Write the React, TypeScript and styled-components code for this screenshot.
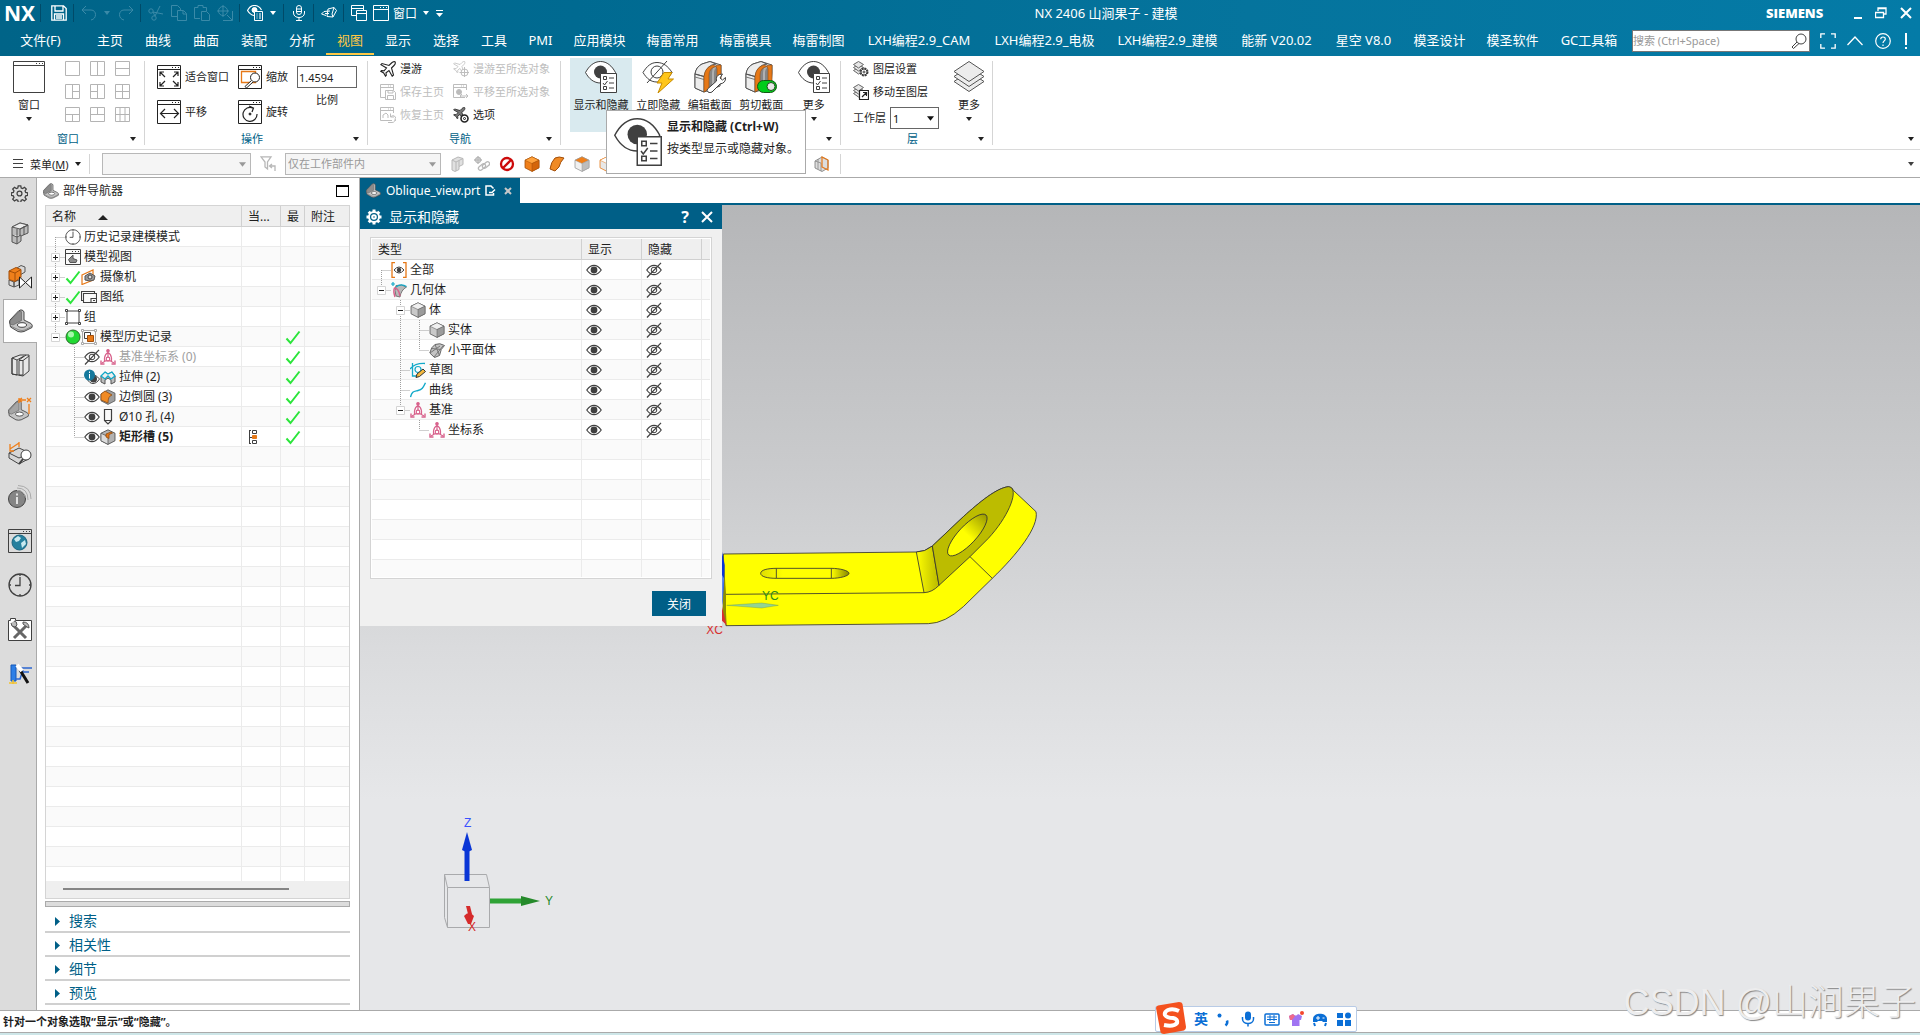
import React from "react";
import styled, { createGlobalStyle } from "styled-components";

const blue = "#005f87";
const ink = "#404040";
const line = "#aaaaaa";

const Global = createGlobalStyle`
  * { box-sizing: border-box; }
  html, body { margin: 0; }
  body, button, input, select {
    font-family: "Noto Sans", "Noto Sans CJK SC", sans-serif;
    font-size: 12px;
    color: #1e1e1e;
  }
  button { background: none; border: 0; padding: 0; margin: 0; }
  svg { display: block; flex: none; }
`;

/* ---------- icon drawing ---------- */

type IconProps = { size?: number; box?: number; children: React.ReactNode; w?: number };
const Icon = ({ size = 16, box = 16, w = 1, children }: IconProps) => (
  <svg width={size} height={size} viewBox={`0 0 ${box} ${box}`} fill="none" stroke="currentColor" strokeWidth={w} aria-hidden="true">
    {children}
  </svg>
);

const Caret = ({ s = 6 }: { s?: number }) => (
  <svg width={s} height={s === 6 ? 4 : 5} viewBox="0 0 6 4" aria-hidden="true"><path d="M0 0h6L3 4z" fill="currentColor" /></svg>
);

const listSheet = (
  <g stroke={ink}>
    <path d="M15.500 12.500h16v19h-16z" fill="#fff" />
    <path d="M18.500 15.500h3v3h-3zM18.500 25.500h3v3h-3z" />
    <path d="M24 17h5M24 22h5M24 27h5M18 22l1.500 2 3-4" />
  </g>
);
const EyeList = ({ size = 32 }: { size?: number }) => (
  <Icon size={size} box={32}>
    <path d="M.5 11.500C4 5 9 .5 15.500 .5S27 5 30.500 11.500C27 18 22 22 15.500 22S4 18 .5 11.500z" fill="#fff" stroke={ink} />
    <circle cx="15.500" cy="11" r="6.500" fill={ink} stroke="none" />
    {listSheet}
  </Icon>
);
const EyeListWhite = () => (
  <Icon>
    <path d="M7 10.500C4 10 2 8 .5 5.500 2 2.500 4.500 .5 7.500 .5c3 0 5.500 2 7 4.500" strokeWidth="1.200" />
    <circle cx="7.500" cy="5" r="2.500" fill="#fff" />
    <path d="M7.500 6.500h8v9h-8z" fill="#006890" />
    <path d="M9.500 9h1M9.500 11h1M9.500 13h1M12 9h2M12 11h2M12 13h2" />
  </Icon>
);
const EyeFlash = () => (
  <Icon size={32} box={32}>
    <path d="M1 11.500C5 5 9 1.500 15 1.500s11 3.500 15 10C26 18 21 21 15 21S5 18 1 11.500z" stroke={ink} />
    <circle cx="15" cy="11" r="6" stroke={ink} />
    <path d="M5 22L25 0" stroke={ink} />
    <path d="M22 11.500h8l-4 6.500h5.500L16 32l4-10h-5z" fill="#ffc61a" stroke="#c78a00" />
  </Icon>
);
const SectionBody = ({ tool }: { tool: "wrench" | "switch" }) => (
  <Icon size={32} box={32}>
    <path d="M1 13Q2 6 8 3l8-2.500L27 4v8l-1 13-10 4-6 2-9-4z" fill="#cfcfcf" stroke="#555" />
    <path d="M1 13l9 2.500V31l-9-4zM8 3l8-2.500L22 3q-10 1-12 12.500L1 13Q2 6 8 3z" fill="#ededed" stroke="#555" />
    <path d="M1 16l9 2.500" stroke="#777" />
    <path d="M15 27V13q0-6 5-7.500L23 6v18z" fill="#858585" stroke="none" />
    <path d="M19 26V12q0-5 3-6" stroke="#b0b0b0" strokeWidth="2" />
    <path d="M10 31V15.500Q11 6 19 4l3 1.500Q15 7 15 14v14z" fill="#e67817" stroke="#8d4d14" strokeWidth=".6" />
    <path d="M22 4.500L27 4v17l-4 3V8z" fill="#e67817" stroke="#8d4d14" strokeWidth=".6" />
    {tool === "wrench" ? (
      <path d="M13.500 28l9-8q-1-5 3-6.500l3-.5-2.500 4 2.500 2 3-2.500q.5 5.500-5.500 6.500l-8 8q-2 1.500-4 0-1.500-1.500-.5-3z" fill="#fff" stroke={ink} />
    ) : (
      <g><rect x="12.500" y="19.500" width="19" height="12" rx="6" fill="#00cc1a" stroke="#145a14" /><circle cx="26" cy="25.500" r="4" fill="#e7e7e7" stroke="#1b4e1b" /></g>
    )}
  </Icon>
);
const Layers = ({ size = 32 }: { size?: number }) => (
  <Icon size={size} box={32}>
    {[10, 5, 0].map((d) => <path key={d} d={`M16 ${d + 0.5}l15 10-15 10-15-10z`} fill="#ececec" stroke="#555" />)}
  </Icon>
);
const LayerSmall = ({ kind }: { kind: "gear" | "move" }) => (
  <Icon>
    {[6, 3, 0].map((d) => <path key={d} d={`M5.500 ${d + 0.5}l5 3-5 3.500-5-3.500z`} fill="#e6e6e6" stroke="#666" />)}
    {kind === "gear" ? (
      <g stroke={ink}><circle cx="11" cy="11" r="3.700" fill="#fff" strokeWidth="1.600" strokeDasharray="2 .9" /><circle cx="11" cy="11" r="3" fill="#fff" /><circle cx="11" cy="11" r="1" /></g>
    ) : (
      <path d="M6.500 6.500h9v9h-9zM9 13l4-4M10 8.500h3.500V12" fill="#fff" stroke="#222" strokeWidth="1.200" />
    )}
  </Icon>
);
const Win = ({ size = 24, children }: { size?: number; children?: React.ReactNode }) => (
  <Icon size={size} box={size}>
    <path d={`M.5 .5h${size - 1}v${size - 1}h-${size - 1}zM0 4.500h${size}`} />
    <path d={`M${size - 9} 2.500h1m2 0h1m2 0h1`} />
    {children}
  </Icon>
);
const fitGlyph = <path d="M3 11V7h4M3 7l5 5M21 11V7h-4M21 7l-5 5M3 17v4h4M3 21l5-5M21 17v4h-4M21 21l-5-5" strokeWidth="1.200" />;
const zoomGlyph = <g><path d="M3.500 6.500h14v11h-14z" stroke="#e67817" strokeWidth="1.300" /><circle cx="17" cy="12.500" r="4.500" fill="#fff" /><path d="M13.500 15.500L7 21.500l1.500 1.500 6.500-6" fill="#fff" /></g>;
const panGlyph = <path d="M4 13.500h17M8 9l-4.500 4.500L8 18M17 9l4.500 4.500L17 18" strokeWidth="1.200" />;
const rotateGlyph = <g><path d="M15 8a7 7 0 1 0 4 6M11 6l4.500 2L14 12" strokeWidth="1.200" /><circle cx="12" cy="14" r="1" fill={ink} /></g>;

const LAYOUTS = ["", "M7.500 0v15", "M0 7.500h15", "M7.500 0v15M7.500 7.500H15", "M7.500 0v15M0 7.500h7.500", "M7.500 0v15M0 7.500h15", "M0 7.500h15M7.500 7.500V15", "M0 7.500h15M7.500 0v7.500", "M0 7.500h15M5 0v15M10 0v15"];
const LayoutIcon = ({ d }: { d: string }) => (
  <svg width="15" height="15" fill="none" stroke="#b4b4b4" aria-hidden="true"><path d={`M.5 .5h14v14H.5z${d}`} /></svg>
);

const planeD = "M15 .8c-1.200-.5-2.500.2-3.500 1.200L9 4.500 2 2.500 .8 3.700 6.500 7 4 9.800l-2.500-.3-.8.8 3 1.700 1.800 3.200.8-.8-.3-2.600L9 9.500l3.200 5.700 1.300-1.200-2-7L14 4.500C15 3.500 15.700 2 15 .8z";
const Plane = () => <Icon><path d={planeD} strokeWidth="1.100" /></Icon>;
const PlaneTool = ({ gear }: { gear?: boolean }) => (
  <Icon>
    <g transform="scale(.78)"><path d={planeD} fill={gear ? "#777" : "none"} /></g>
    <circle cx="11.500" cy="11.500" r="3.500" fill="#fff" strokeWidth={gear ? 1.600 : 1} />
    {gear ? <circle cx="11.500" cy="11.500" r="1" /> : <path d="M11.500 6v10M6.500 11.500H16" />}
  </Icon>
);
const HomeWin = ({ kind }: { kind: "save" | "restore" | "pan" }) => (
  <Icon>
    <path d="M12 13.500H.5V.5h13V6M0 3.500h14M8 2h1M10 2h1" />
    {kind === "save" && <path d="M5.500 6.500h8l2 2v7h-10zM8 6.500V9h5V6.500M7.500 15v-3.500h6V15" fill="#fff" />}
    {kind === "restore" && <path d="M3 11V8l3-2 2 2v3M15 14a3 3 0 1 0-4-4.500M10.500 6.500v3.500H14M8 15.500h4a3 3 0 0 0 3-4" />}
    {kind === "pan" && <g><circle cx="6" cy="8" r="2.500" fill="#bbb" /><path d="M7 12h8M9 10l-2 2 2 2M13 10l2 2-2 2" /></g>}
  </Icon>
);

const Eye = () => (
  <Icon><path d="M.8 8C3 4.800 5.200 3.300 8 3.300S13 4.800 15.200 8C13 11.200 10.800 12.700 8 12.700S3 11.200 .8 8z" stroke={ink} strokeWidth="1.200" fill="#fff" /><circle cx="8" cy="8" r="3.400" fill={ink} stroke="none" /></Icon>
);
const EyeOff = () => (
  <Icon><path d="M.8 8C3 4.800 5.200 3.300 8 3.300S13 4.800 15.200 8C13 11.200 10.800 12.700 8 12.700S3 11.200 .8 8z" stroke={ink} strokeWidth="1.200" /><circle cx="8" cy="8" r="2.800" stroke={ink} /><path d="M1 15.500L15 .8" stroke={ink} strokeWidth="1.200" /></Icon>
);
const EyeInfo = () => (
  <Icon><path d="M3 10c2-3 4-4 6-4s4 1 6.500 4c-2 3-4 4.500-6.500 4.500S5 13 3 10z" stroke={ink} fill="#fff" /><circle cx="9.500" cy="10" r="3.500" fill={ink} stroke="none" /><circle cx="5.500" cy="6" r="5.500" fill="#14789c" stroke="none" /><path d="M5.500 5v4.500M5.500 2.500V4" stroke="#fff" /></Icon>
);
const Tick = () => <Icon><path d="M1.500 9.500l4 4.500L14.500 2.500" stroke="#2be53b" strokeWidth="2" /></Icon>;
const Clock = ({ size = 16 }: { size?: number }) => (
  <Icon size={size} box={24}><circle cx="12" cy="12" r="11" strokeWidth="1.300" /><path d="M12 4v8.500H7M12 1v2M12 21v2M1 12h2M21 12h2" strokeWidth="1.300" /></Icon>
);
const Bracket = ({ size = 16 }: { size?: number }) => (
  <Icon size={size} box={24}>
    <path d="M1 15Q0 13 1 11L9.500 2Q12 0 14 1.500L15 3v8l7 3.500q2 1.500 1 4l-8 4q-3 1-6 0L1.500 18z" fill="#c4c4c4" stroke="#4a4a4a" />
    <path d="M1 12L10 2.500Q12 1 12.500 3v8.500L4 16l-3-1z" fill="#8c8c8c" stroke="#5a5a5a" strokeWidth=".6" />
    <ellipse cx="13" cy="16" rx="4.500" ry="2.300" fill="#fff" stroke="#444" />
    <path d="M1.500 17L10 21q3 1 6 0l7-4" stroke="#777" strokeWidth=".8" />
  </Icon>
);
const Cube = ({ top = "#f0f0f0", left = "#c9c9c9", right = "#9c9c9c", edge = "#555", size = 16 }: { top?: string; left?: string; right?: string; edge?: string; size?: number }) => (
  <Icon size={size} w={0.8}>
    <path d="M8 .8l7 3.400v7.600l-7 3.600-7-3.600V4.200z" fill={left} stroke={edge} />
    <path d="M1 4.200l7 3.400 7-3.400L8 .8z" fill={top} stroke={edge} strokeWidth=".5" />
    <path d="M15 4.200v7.600l-7 3.600V7.600z" fill={right} stroke={edge} strokeWidth=".5" />
  </Icon>
);
const Csys = () => (
  <Icon><g stroke="#d8628c" strokeWidth="1.200"><path d="M8 1v8M8 10.500l-6 3.500M8 10.500l6 3.500M8 3.500Q5 5 4.500 9v3h7V9Q11 5 8 3.500" /><circle cx="8" cy="1.800" r="1.200" fill="#d8628c" /><circle cx="8" cy="10" r="1.800" fill="#fff" /><path d="M1 11.500v3.500h3.500M15 11.500v3.500h-3.500" strokeWidth="1.400" /></g></Icon>
);
const ModelView = () => <Win size={16}><path d="M3.500 10.500L8 6v3.500l4 1.500-1 2.500H5z" fill="#8d8d8d" stroke="#555" /></Win>;
const Camera = () => <Icon><path d="M1 6l11-5v10L1 15.500z" stroke="#e67817" strokeWidth="1.200" /><path d="M4 7l5-3 5 3-1 4-4 1-5-1z" fill="#999" stroke="#555" /><circle cx="9" cy="8" r="2" fill="#ddd" stroke="#444" /></Icon>;
const Drawing = () => <Icon><path d="M2 11.500H.5v-9h13V4M2.500 4.500h13v9h-13zM10 13V9.500h5M12 11.500h2" strokeWidth="1.100" /></Icon>;
const Group = () => <Icon><path d="M2 2h12v12H2z" /><path d="M.5 .5h2v2h-2zM13.500 .5h2v2h-2zM.5 13.500h2v2h-2zM13.500 13.500h2v2h-2z" fill="#fff" /></Icon>;
const GreenBall = () => <Icon><circle cx="8" cy="8" r="7" fill="#20d832" stroke="#2b6b2b" /><circle cx="6" cy="5.500" r="3" fill="#a5f7ab" stroke="none" /></Icon>;
const History = () => <Icon><path d="M1.500 1.500h13v13h-13z" stroke="#a8a8a8" /><path d="M.5 .5h2v2h-2zM13.500 .5h2v2h-2zM.5 13.500h2v2h-2zM13.500 13.500h2v2h-2z" fill="#fff" stroke="#a8a8a8" /><path d="M3.500 3.500h6v6h-6z" fill="#fff" /><path d="M6.500 6.500h6v6h-6z" fill="#e67817" stroke="#a34e08" /></Icon>;
const Extrude = () => <Icon><path d="M1 7l4-4 3 2 4-2 3 4v6l-4 2v-4L8 9l-3 2v4l-4-2z" fill="#bdbdbd" stroke="#555" /><path d="M1 7l4-4 3 2 4-2 3 4-4 3-3-3-3 3z" fill="#eee" stroke="#12a9c9" strokeWidth="1.300" /></Icon>;
const Blend = () => <Icon w={0.8}><path d="M8 .8l7 3.400v7.600l-7 3.600-7-3.600V5z" fill="#9f9f9f" stroke="#555" /><path d="M1 5l4-3 7 4q-4 1-4 8L1 11z" fill="#f08a24" stroke="#8d4d14" /></Icon>;
const Hole = () => <Icon><path d="M4.500 .5h7v11L8 15l-3.500-3.500zM4.500 11.500h7" strokeWidth="1.200" /></Icon>;
const Slot = () => <Icon w={0.8}><path d="M8 .8l7 3.400v7.600l-7 3.600-7-3.600V4.200z" fill="#b3b3b3" stroke="#444" /><path d="M1 4.200l7 3.400v7.800l-7-3.600z" fill="#dcdcdc" stroke="#555" /><path d="M6 5l5-2 1.500 1L9 5.500v4L6 8z" fill="#e67817" stroke="#8d4d14" /></Icon>;
const Chain = () => <Icon><path d="M3.500 1v14M3 1.500h2M3 8.500h3M3 14.500h2M6.500 1.500h4v3h-4zM6.500 11.500h4v3h-4z" /><path d="M6.500 6.500h4v3h-4z" fill="#e67817" stroke="#e67817" /></Icon>;
const All = () => <Icon><path d="M4 .5H1v15h3M12 .5h3v15h-3" stroke="#e67817" strokeWidth="1.300" /><path d="M3 8q5-6 10 0-5 6-10 0z" stroke={ink} /><circle cx="8" cy="8" r="2.200" fill={ink} stroke="none" /></Icon>;
const Geometry = () => <Icon><path d="M5 3.500Q11 2 15.500 5 10 8 9 15l-4-1q-2-6 0-10.500z" fill="#b9b9b9" stroke="#777" /><path d="M4 15q-2-6-.5-9 4 0 5.500 8" stroke="#d8628c" strokeWidth="1.500" /><path d="M5 5q5-4 10.500-.5M0 2h4M2 0v4" stroke="#12a9c9" strokeWidth="1.200" /></Icon>;
const Facet = () => <Icon><path d="M6 2.500q5-2 9.500 1-4 3-5 10l-5 2L.8 11Q2 5 6 2.500z" fill="#c4c4c4" stroke="#666" /><path d="M3 6.500l9 1M6 2.500l4.500 11M1 11l10-7M14 4L5 15" stroke="#777" /></Icon>;
const Sketch = () => <Icon><path d="M2.500 1v13H8M0 7Q5 1 15 1.500" stroke="#12a9c9" strokeWidth="1.300" /><circle cx="8" cy="7.500" r="3" stroke="#12a9c9" strokeWidth="1.200" /><path d="M6 15.500l1-3.500 6-5 2.500 2.500-6 5z" fill="#f3b83f" stroke="#333" /></Icon>;
const Curve = () => <Icon><path d="M.5 15C2 9 4 9.500 8 8.500S13 6 15.500 .8" stroke="#12a9c9" strokeWidth="1.400" /></Icon>;
const Cog = ({ size = 16, w = 1.300 }: { size?: number; w?: number }) => (
  <Icon size={size} w={w}><circle cx="8" cy="8" r="5" /><circle cx="8" cy="8" r="1.800" /><path d="M8 .5V3M8 13v2.500M.5 8H3M13 8h2.500M2.700 2.700l1.800 1.800M11.500 11.500l1.800 1.800M13.300 2.700l-1.800 1.800M4.500 11.500l-1.800 1.800" strokeWidth={w * 1.500} /></Icon>
);
const GearOutline = () => (
  <Icon size={17} w={1.200}>
    <circle cx="8" cy="8" r="2.300" />
    <path d="M6.800 .8h2.400l.4 2 1.400.6 1.700-1.200 1.700 1.700-1.200 1.700.6 1.400 1.900.4v2.400l-1.900.4-.6 1.400 1.200 1.700-1.700 1.700-1.700-1.200-1.400.6-.4 1.900H6.800l-.4-1.900-1.400-.6-1.700 1.200-1.700-1.700 1.200-1.700-.6-1.400-1.900-.4V7.400L2.200 7l.6-1.400-1.200-1.700 1.700-1.700L5 3.400l1.400-.6z" />
  </Icon>
);

/* ---------- shell ---------- */

const Page = styled.div`
  display: flex;
  flex-direction: column;
  height: 100vh;
  min-width: 1200px;
  overflow: hidden;
  background: #fff;
  position: relative;
`;
const Header = styled.header`
  background: linear-gradient(90deg, #006488 0%, #006a91 30%, #05749d 65%, #047ba7 100%);
  color: #fff;
  flex: none;
`;
const TitleRow = styled.div`
  display: flex;
  align-items: center;
  height: 26px;
`;
const Brand = styled.strong`
  font-size: 21px;
  line-height: 26px;
  padding-left: 4px;
  width: 37px;
`;
const ToolBtn = styled.button<{ $w?: number; $dim?: boolean }>`
  display: flex;
  align-items: center;
  justify-content: center;
  gap: 4px;
  height: 24px;
  width: ${(p) => p.$w ?? 23}px;
  color: ${(p) => (p.$dim ? "#3a8aa8" : "#fff")};
  flex: none;
`;
const DarkSep = styled.span`
  width: 1px;
  height: 18px;
  margin: 0 3px;
  background: #004a68;
`;
const WindowTitle = styled.div`
  flex: 1;
  text-align: center;
  font-size: 13px;
  line-height: 26px;
  white-space: nowrap;
`;
const Siemens = styled.strong`
  font-family: "Open Sans", "Noto Sans", sans-serif;
  font-size: 13px;
  font-weight: 800;
  line-height: 28px;
  width: 80px;
`;
const MenuRow = styled.div`
  display: flex;
  align-items: center;
  height: 30px;
`;
const Tab = styled.button<{ $w: number; $on?: boolean }>`
  width: ${(p) => p.$w}px;
  height: 28px;
  line-height: 26px;
  font-size: 13px;
  white-space: nowrap;
  color: ${(p) => (p.$on ? "#ffc845" : "#fff")};
  border-bottom: 2px solid ${(p) => (p.$on ? "#ffc845" : "transparent")};
  &:first-child { margin-right: 5px; }
`;
const Search = styled.label`
  display: flex;
  align-items: center;
  width: 178px;
  height: 22px;
  margin-left: auto;
  background: #fff;
  border: 1px solid #777;
  color: ${ink};
  padding-right: 2px;
  input {
    flex: 1;
    min-width: 0;
    border: 0;
    outline: 0;
    padding: 0;
    font-size: 11px;
    line-height: 18px;
    background: none;
  }
  input::placeholder { color: #999; opacity: 1; }
`;
const TitleTools = styled.div`
  display: flex;
  align-items: center;
  justify-content: space-between;
  width: 110px;
  padding: 0 10px;
`;
const WinTools = styled(TitleTools)`
  width: 74px;
  padding: 0 8px;
`;

/* ---------- ribbon ---------- */

const Ribbon = styled.div`
  display: flex;
  height: 94px;
  padding-top: 5px;
  border-bottom: 1px solid #dadada;
  flex: none;
`;
const RibbonGroup = styled.section<{ $w: number }>`
  display: flex;
  flex-direction: column;
  width: ${(p) => p.$w}px;
  height: 84px;
  border-right: 1px solid #d5d5d5;
  flex: none;
`;
const GroupBody = styled.div<{ $pad: number; $gap?: number }>`
  display: flex;
  align-items: flex-start;
  gap: ${(p) => p.$gap ?? 0}px;
  height: 72px;
  padding-left: ${(p) => p.$pad}px;
`;
const GroupFoot = styled.button`
  display: grid;
  grid-template-columns: 1fr auto 1fr;
  align-items: center;
  height: 12px;
  padding-right: 8px;
  font-size: 11px;
  line-height: 12px;
  color: ${blue};
  svg { justify-self: end; color: #222; }
  span { grid-column: 2; }
`;
const BigBtn = styled.button<{ $w: number; $on?: boolean }>`
  display: flex;
  flex-direction: column;
  align-items: center;
  width: ${(p) => p.$w}px;
  height: 74px;
  margin-top: -3px;
  padding-top: 3px;
  font-size: 11px;
  line-height: 16px;
  white-space: nowrap;
  color: #222;
  background: ${(p) => (p.$on ? "#d9eaef" : "none")};
  span { margin: 4px 0 4px; }
`;
const LayoutGrid = styled.div`
  display: grid;
  grid-template-columns: repeat(3, 15px);
  gap: 8px 10px;
  button { height: 15px; }
`;
const Stack = styled.div<{ $gap: number; $top?: number }>`
  display: flex;
  flex-direction: column;
  align-items: flex-start;
  gap: ${(p) => p.$gap}px;
  padding-top: ${(p) => p.$top ?? 0}px;
`;
const LineBtn = styled.button`
  display: flex;
  align-items: center;
  gap: 4px;
  font-size: 11px;
  line-height: 16px;
  white-space: nowrap;
  color: #222;
  &:disabled { color: #bdbdbd; }
`;
const Field = styled.label`
  display: flex;
  flex-direction: column;
  align-items: center;
  font-size: 11px;
  line-height: 16px;
  gap: 4px;
  input {
    width: 60px;
    height: 22px;
    border: 1px solid #666;
    padding: 0 1px;
    font-size: 11px;
  }
`;
const InlineField = styled.label`
  display: flex;
  align-items: center;
  gap: 4px;
  font-size: 11px;
  line-height: 16px;
  white-space: nowrap;
`;
const SelectWrap = styled.span<{ $w: number; $off?: boolean }>`
  position: relative;
  display: block;
  width: ${(p) => p.$w}px;
  height: 22px;
  flex: none;
  color: ${(p) => (p.$off ? "#999" : "#111")};
  select {
    appearance: none;
    width: 100%;
    height: 100%;
    padding: 0 2px;
    font-size: 11px;
    color: inherit;
    opacity: 1;
    border: 1px solid ${(p) => (p.$off ? "#b8b8b8" : "#666")};
    border-radius: 0;
    background: ${(p) => (p.$off ? "#f5f5f5" : "#fff")};
  }
  svg { position: absolute; right: 5px; top: 9px; pointer-events: none; }
`;
const RibbonEnd = styled.button`
  margin: 0 6px 8px auto;
  align-self: flex-end;
`;
const TipAnchor = styled.div`
  position: relative;
`;
const Tip = styled.div`
  position: absolute;
  left: 36px;
  top: 49px;
  z-index: 10;
  display: flex;
  gap: 5px;
  width: 200px;
  height: 64px;
  padding: 7px;
  background: #fff;
  border: 1px solid ${line};
  white-space: nowrap;
  line-height: 22px;
  strong, span { display: block; }
`;
const TipText = styled.div`
  margin-top: -2px;
`;

/* ---------- selection bar ---------- */

const SelectionBar = styled.div`
  display: flex;
  align-items: center;
  height: 28px;
  padding: 0 6px 0 12px;
  border-bottom: 1px solid ${line};
  flex: none;
`;
const MenuBtn = styled.button`
  display: flex;
  align-items: center;
  gap: 6px;
  width: 77px;
  font-size: 11px;
  white-space: nowrap;
`;
const LightSep = styled.span`
  width: 1px;
  height: 20px;
  background: #d5d5d5;
`;
const IconSlot = styled.button<{ $w?: number; $faded?: boolean }>`
  display: flex;
  justify-content: center;
  width: ${(p) => p.$w ?? 25}px;
  color: ${(p) => (p.$faded ? "#888" : ink)};
  opacity: ${(p) => (p.$faded ? 0.6 : 1)};
`;
const Push = styled.span<{ $w?: number }>`
  width: ${(p) => (p.$w ? `${p.$w}px` : "auto")};
  margin-left: ${(p) => (p.$w ? 0 : "auto")};
`;

/* ---------- body ---------- */

const Body = styled.div`
  display: flex;
  flex: 1;
  min-height: 0;
`;
const Rail = styled.nav`
  display: flex;
  flex-direction: column;
  width: 37px;
  padding-top: 1px;
  background: #dcdcdc;
  flex: none;
  border-right: 1px solid ${line};
`;
const RailBtn = styled.button<{ $on?: boolean; $first?: boolean }>`
  display: flex;
  align-items: center;
  justify-content: center;
  height: ${(p) => (p.$first ? 32 : 44)}px;
  padding-bottom: ${(p) => (p.$first ? 4 : 0)}px;
  margin: 0 ${(p) => (p.$on ? -1 : 0)}px 0 3px;
  color: ${ink};
  ${(p) => p.$on && `background:#fff;border:1px solid ${line};border-right:0;`}
`;
const Side = styled.aside`
  display: flex;
  flex-direction: column;
  width: 323px;
  padding: 0 9px 5px 8px;
  border-right: 1px solid ${line};
  flex: none;
`;
const SideTitle = styled.div`
  display: flex;
  align-items: center;
  gap: 4px;
  height: 27px;
  padding-bottom: 2px;
  line-height: 20px;
  margin-left: -2px;
  button { margin-left: auto; width: 13px; height: 12px; margin-right: 1px; border: 1px solid #000; border-top-width: 2px; }
`;
const Sheet = styled.div`
  display: flex;
  flex-direction: column;
  flex: 1;
  min-height: 0;
  border: 1px solid #d4d4d4;
  background: #fff;
`;
const SheetRows = styled.div`
  flex: 1;
  min-height: 0;
  overflow: hidden;
`;
const Table = styled.table`
  width: 100%;
  table-layout: fixed;
  border-collapse: separate;
  border-spacing: 0;
  line-height: 18px;
  th, td {
    height: 20px;
    padding: 0;
    border: solid #ebebeb;
    border-width: 0 1px 1px 0;
    white-space: nowrap;
    overflow: hidden;
  }
  th { height: 21px; font-weight: 400; text-align: left; padding: 2px 0 0 6px; background: #efefef; border-color: #d0d0d0; }
  th:last-child, td:last-child { border-right: 0; }
  tbody tr:nth-child(even) td { background: #fafafa; }
`;
const TreeLine = styled.div<{ $dim?: boolean; $bold?: boolean }>`
  display: flex;
  align-items: center;
  height: 19px;
  color: ${(p) => (p.$dim ? "#a0a0a0" : "#1e1e1e")};
  font-weight: ${(p) => (p.$bold ? 700 : 400)};
  svg { color: ${ink}; }
  span { margin-left: 3px; }
`;
const CellIcon = styled.div<{ $pad: number }>`
  display: flex;
  padding-left: ${(p) => p.$pad}px;
  height: 16px;
  color: ${ink};
`;
const EyeBtn = styled.button`
  display: flex;
  margin-left: 4px;
`;
const SortHead = styled.span`
  display: inline-flex;
  align-items: center;
  gap: 22px;
`;
const ScrollTrack = styled.div`
  height: 17px;
  padding: 7px 60px 0 17px;
  background: #efefef;
  &::before { content: ""; display: block; height: 2px; background: #858585; }
`;
const Splitter = styled.div`
  height: 6px;
  margin: 2px 0;
  background: #dcdcdc;
  border: 1px solid ${line};
`;
const Fold = styled.button`
  display: flex;
  align-items: center;
  gap: 9px;
  height: 24px;
  padding: 2px 0 0 10px;
  font-size: 14px;
  line-height: 20px;
  color: ${blue};
  border-bottom: 2px solid #d0d0d0;
`;

const Main = styled.main`
  display: flex;
  flex-direction: column;
  flex: 1;
  min-width: 0;
`;
const FileTab = styled.div`
  display: flex;
  align-items: center;
  width: 160px;
  height: 25px;
  padding: 0 7px 0 6px;
  gap: 5px;
  background: ${blue};
  color: #fff;
  font-size: 12px;
  white-space: nowrap;
  span { flex: 1; }
`;
const Canvas = styled.div`
  position: relative;
  flex: 1;
  border-top: 2px solid ${blue};
  background: linear-gradient(#b5b6b8 0%, #c9cacc 32%, #dadbdd 55%, #e6e7e9 74%, #e6e7e9 100%);
`;
const Placed = styled.div<{ $x: number; $y: number }>`
  position: absolute;
  left: ${(p) => p.$x}px;
  top: ${(p) => p.$y}px;
`;
const Dialog = styled.section`
  position: absolute;
  left: 0;
  top: 0;
  width: 362px;
  background: #f0f0f0;
`;
const DialogHead = styled.div`
  display: flex;
  align-items: center;
  height: 24px;
  padding: 0 9px 0 6px;
  background: ${blue};
  color: #fff;
  button { color: #fff; font-size: 16px; line-height: 20px; font-weight: 700; margin-left: 12px; }
`;
const DialogTitle = styled.h2`
  flex: 1;
  margin: 0 0 0 7px;
  font-size: 14px;
  line-height: 22px;
  font-weight: 400;
`;
const DialogSheet = styled(Sheet)`
  height: 342px;
  margin: 8px 10px 12px;
  padding: 1px;
  flex: none;
`;
const DialogFoot = styled.div`
  display: flex;
  justify-content: flex-end;
  padding: 0 16px 10px;
`;
const Primary = styled.button`
  width: 54px;
  height: 25px;
  background: ${blue};
  color: #fff;
`;
const Status = styled.footer`
  height: 23px;
  padding-left: 3px;
  font-size: 11px;
  line-height: 21px;
  font-weight: 700;
  border-top: 1px solid ${line};
  border-bottom: 1px solid ${line};
  flex: none;
`;
const Desktop = styled.div`
  height: 2px;
  background: #cde6e8;
  flex: none;
`;
const Watermark = styled.div`
  position: absolute;
  right: 4px;
  bottom: 9px;
  font-family: "Liberation Sans", "Noto Sans CJK SC", sans-serif;
  font-size: 36px;
  line-height: 46px;
  font-weight: 300;
  color: #ededee;
  text-shadow: 1px 1px 1px #888;
`;
const Ime = styled.div`
  position: absolute;
  right: 563px;
  bottom: 3px;
  display: flex;
  align-items: center;
  gap: 8px;
  height: 26px;
  padding: 0 4px 0 38px;
  background: #fff;
  border: 1px solid #b8cbe6;
  border-radius: 2px;
  color: #0b6fd6;
  strong { font-size: 14px; line-height: 20px; }
`;
const ImeLogo = styled.div`
  position: absolute;
  left: -1px;
  top: -5px;
`;

/* ---------- trees ---------- */

/* Guide codes: u = line up, d = line down, r = line right, + / - = expander box. */
const Guide = ({ code }: { code: string }) => {
  const boxed = /[+-]/.test(code);
  return (
    <svg width="19" height="20" fill="none" stroke="#a0a0a0" strokeDasharray="1 1" aria-hidden="true">
      {code.includes("u") && <path d="M9.500 0v10" />}
      {code.includes("d") && <path d="M9.500 10v10" />}
      {code.includes("r") && <path d="M9.500 10.500H19" />}
      {boxed && (
        <g strokeDasharray="none">
          <path d="M5.500 6.500h8v8h-8z" fill="#fff" stroke="#d4d4d4" />
          <path d={code.includes("+") ? "M7 10.500h5M9.500 8v5" : "M7 10.500h5"} stroke="#222" />
        </g>
      )}
    </svg>
  );
};
type Node = { g: string[]; icons: React.ReactNode[]; text: string; dim?: boolean; bold?: boolean; tick?: boolean; mark?: boolean };
const TreeCell = ({ n }: { n: Node }) => (
  <TreeLine $dim={n.dim} $bold={n.bold}>
    {n.g.map((c, i) => <Guide key={i} code={c} />)}
    {n.icons.map((ic, i) => <React.Fragment key={i}>{ic}</React.Fragment>)}
    <span>{n.text}</span>
  </TreeLine>
);

const NAV: Node[] = [
  { g: ["dr"], icons: [<Clock />], text: "历史记录建模模式" },
  { g: ["udr+"], icons: [<ModelView />], text: "模型视图" },
  { g: ["udr+"], icons: [<Tick />, <Camera />], text: "摄像机" },
  { g: ["udr+"], icons: [<Tick />, <Drawing />], text: "图纸" },
  { g: ["udr+"], icons: [<Group />], text: "组" },
  { g: ["ur-"], icons: [<GreenBall />, <History />], text: "模型历史记录", tick: true },
  { g: ["", "udr"], icons: [<EyeOff />, <Csys />], text: "基准坐标系 (0)", dim: true, tick: true },
  { g: ["", "udr"], icons: [<EyeInfo />, <Extrude />], text: "拉伸 (2)", tick: true },
  { g: ["", "udr"], icons: [<Eye />, <Blend />], text: "边倒圆 (3)", tick: true },
  { g: ["", "udr"], icons: [<Eye />, <Hole />], text: "Ø10 孔 (4)", tick: true },
  { g: ["", "ur"], icons: [<Eye />, <Slot />], text: "矩形槽 (5)", bold: true, tick: true, mark: true },
];
const TYPES: Node[] = [
  { g: ["dr"], icons: [<All />], text: "全部" },
  { g: ["ur-"], icons: [<Geometry />], text: "几何体" },
  { g: ["", "udr-"], icons: [<Cube />], text: "体" },
  { g: ["", "ud", "udr"], icons: [<Cube />], text: "实体" },
  { g: ["", "ud", "ur"], icons: [<Facet />], text: "小平面体" },
  { g: ["", "udr"], icons: [<Sketch />], text: "草图" },
  { g: ["", "udr"], icons: [<Curve />], text: "曲线" },
  { g: ["", "ur-"], icons: [<Csys />], text: "基准" },
  { g: ["", "", "ur"], icons: [<Csys />], text: "坐标系" },
];

const TABS: [string, number][] = [
  ["文件(F)", 81], ["主页", 48], ["曲线", 48], ["曲面", 48], ["装配", 48], ["分析", 48], ["视图", 48], ["显示", 48], ["选择", 48], ["工具", 48], ["PMI", 45],
  ["应用模块", 73], ["梅雷常用", 73], ["梅雷模具", 73], ["梅雷制图", 73], ["LXH编程2.9_CAM", 128], ["LXH编程2.9_电极", 123], ["LXH编程2.9_建模", 123],
  ["能新 V20.02", 95], ["星空 V8.0", 79], ["模圣设计", 73], ["模圣软件", 73], ["GC工具箱", 80],
];

const RAIL: { label: string; icon: React.ReactNode; on?: boolean }[] = [
  { label: "装配导航器", icon: <Icon size={24} box={24}><path d="M4 6l8-4 8 2v8l-7 3v5l-4 3-5-2z" fill="#bcbcbc" stroke="#555" /><path d="M4 6l8-4 8 2-8 4zM4 14l5 2 4-2" fill="#ededed" stroke="#555" /><path d="M9 8v15M12 8v7M16 5v9M12 8l8-4" stroke="#555" /></Icon> },
  { label: "约束导航器", icon: <Icon size={24} box={24}><path d="M1 15l5 2v5l-5-2zM6 17l5-2v5l-5 2zM9 3l4-2.500 4 1.500v5l-5 3z" fill="#d8d8d8" stroke="#555" /><path d="M1 6l7-3.500 5 2v8l-6 4-6-2z" fill="#ef7f1a" stroke="#a34e08" /><path d="M1 6l6 2 6-3.500M7 8v8" stroke="#a34e08" /><path d="M11.500 12v11l6-5.500 6 5.500V12l-6 5.500z" fill="#fff" stroke="#222" /></Icon> },
  { label: "部件导航器", icon: <Bracket size={24} />, on: true },
  { label: "重用库", icon: <Icon size={24} box={24}><path d="M4 5l8-3h9v16l-6 5-5-1-6-1z" fill="#e6e6e6" /><path d="M4 5l5 2v15l-5-1zM9 7l7-4M11 7.500h4V22h-4zM15 7.500L21 3M11 7l7-5" /></Icon> },
  { label: "PMI 导航器", icon: <Icon size={24} box={24}><g transform="translate(0 3) scale(.88)"><path d="M1 15Q0 13 1 11L9.500 2Q12 0 14 1.500L15 3v8l7 3.500q2 1.500 1 4l-8 4q-3 1-6 0L1.500 18z" fill="#c4c4c4" stroke="#4a4a4a" /><path d="M1 12L10 2.500Q12 1 12.500 3v8.500L4 16l-3-1z" fill="#a5a5a5" stroke="#5a5a5a" strokeWidth=".6" /><ellipse cx="13" cy="16" rx="4.500" ry="2.300" fill="#fff" stroke="#444" /></g><path d="M11 1v5M11 3h7M14 1l-3 2 3 2M19 1l4 4M23 1l-4 4M21 7v10" stroke="#ef7f1a" strokeWidth="1.300" /></Icon> },
  { label: "测量", icon: <Icon size={24} box={24}><path d="M1 12l10-5 11 5v5l-11 6-10-6z" fill="#d6d6d6" stroke="#444" /><path d="M1 12l10 5 11-5" stroke="#444" /><path d="M2 8l9-6M2 3v7h4M11 1v5" stroke="#ef7f1a" strokeWidth="1.300" /><circle cx="18" cy="14" r="5" fill="#fff" /><path d="M15 18l-4 5" strokeWidth="2" /></Icon> },
  { label: "HD3D 工具", icon: <Icon size={24} box={24}><circle cx="9" cy="14" r="8.500" fill="#858585" stroke="#444" /><path d="M9 12v7M9 8.500v2" stroke="#fff" strokeWidth="1.500" /><path d="M9 3q11 0 11 12M10 .5Q23 1 23 14M9 5.500q7 0 8.500 7" stroke="#aaa" /></Icon> },
  { label: "Web 浏览器", icon: <Win size={24}><circle cx="11.500" cy="13.500" r="7.500" fill="#26809e" stroke="#1b6580" /><path d="M6 10l4-3 3 2-2 3-3 1zM13 14l4-3 1 4-4 4z" fill="#c9e9ef" stroke="none" /></Win> },
  { label: "历史记录", icon: <Clock size={24} /> },
  { label: "加工向导", icon: <Icon size={24} box={24}><path d="M.5 3.500h2v-2h5v2h16v20H.5z" fill="#fff" /><path d="M5 8l13 13M19 8L6 21" stroke="#666" strokeWidth="3" /><path d="M3 6q0 4 4 4l2-2q0-4-3-4M15 5q6 0 6 6l-2-1-4-3z" fill="#bbb" stroke="#555" /></Icon> },
  { label: "系统可视化", icon: <Icon size={24} box={24}><path d="M3 4h5v16H3z" fill="#2e7fe6" stroke="#1559b8" /><path d="M8 18h4l3-9M12 7h12M12 11h9" stroke="#2b66d0" strokeWidth="1.500" /><path d="M12 9l8 13" stroke="#111" strokeWidth="3" /><path d="M9 4l5 6" stroke="#fff" strokeWidth="4" /><path d="M1 22h8M5 19v4" stroke="#f2c230" strokeWidth="1.500" /></Icon> },
];

const PartModel = () => (
  <svg width="380" height="190" viewBox="60 0 1140 570" aria-label="Oblique_view">
    <defs>
      <linearGradient id="bend"><stop offset="0" stopColor="#ff0" /><stop offset="1" stopColor="#b9b900" /></linearGradient>
      <linearGradient id="bore" x1="0" y1="0" x2="1" y2="0"><stop offset=".5" stopColor="#ff0" /><stop offset="1" stopColor="#9a9a00" /></linearGradient>
      <linearGradient id="slot"><stop offset="0" stopColor="#dede00" /><stop offset=".25" stopColor="#ff0" /><stop offset=".8" stopColor="#ff0" /><stop offset="1" stopColor="#888800" /></linearGradient>
    </defs>
    <text x="79" y="522" fontSize="36" fill="#d83030" fontFamily="Liberation Sans, sans-serif">XC</text>
    <g stroke="#333" strokeWidth="2.500" strokeLinejoin="round">
      <path d="M130 282L709 276Q735 276 757 258L850 170C900 125 950 84 985 80Q996 80 1001 92L1068 155C1078 200 1010 285 937 355L850 440Q795 490 745 491L138 497z" fill="#ff0" />
      <path d="M130 282L138 403V497L128 470z" fill="#8d8d00" stroke="none" />
      <path d="M709 276Q735 276 757 258L777 376Q757 397 732 398z" fill="url(#bend)" />
      <path d="M757 258L850 170C900 125 950 84 985 80C1020 82 990 165 925 235L870 290 777 376z" fill="#bcbc00" />
      <ellipse cx="862" cy="225" rx="82" ry="27" transform="rotate(-47 862 225)" fill="url(#bore)" />
      <path d="M138 403L732 398M870 290L937 355" fill="none" />
      <path d="M289 325H454C480 325 507 332 507 340S480 355 454 355H289C262 355 242 350 242 340S262 325 289 325zM289 325v30M454 325v30" fill="url(#slot)" />
    </g>
    <path d="M126 275l8 40-2 60-6 60z" fill="#0b35d8" />
    <path d="M126 345l6 10-3 60-3 20z" fill="#5b86ee" />
    <path d="M126 440l14 56-14-14z" fill="#d83030" />
    <path d="M140 436L245 429 295 436 245 444z" fill="#93d493" stroke="#5b8b4d" strokeWidth="1" />
    <text x="246" y="420" fontSize="36" fill="#2f8a1c" fontFamily="Liberation Sans, sans-serif">YC</text>
  </svg>
);

const Triad = () => (
  <svg width="120" height="120" fill="none" aria-label="视图三重轴">
    <g stroke="#a9aaac"><path d="M8.500 72.500h42v40h-42zM8.500 72.500l-3-13h42l3 13M5.500 59.500v43l3 10" /></g>
    <path d="M25.500 36h5v30h-5z" fill="#0a36d6" /><path d="M28 17l5 18q-5 3-10 0z" fill="#0a36d6" />
    <path d="M51 83.500h32v5H51z" fill="#2fa336" /><path d="M101 86l-19-5v10z" fill="#258a2b" />
    <path d="M27 91h4l2 8h-4z" fill="#d52b2b" /><path d="M25 101q5-6 10 0l-3 8h-3z" fill="#d52b2b" />
    <g fontFamily="Liberation Sans, sans-serif" fontSize="12">
      <text x="25" y="12" fill="#3a52ff">Z</text>
      <text x="106" y="90" fill="#2a8a2a">Y</text>
      <text x="29" y="116" fill="#d52b2b">X</text>
    </g>
  </svg>
);

const orange = { top: "#ffa23c", left: "#ef7f1a", right: "#d4650a", edge: "#a34e08" };

export default function App() {
  return (
    <Page>
      <Global />
      <Header>
        <TitleRow>
          <Brand>NX</Brand>
          <DarkSep />
          <Push $w={3} />
          <ToolBtn aria-label="保存"><Icon w={1.300}><path d="M.8 .8h11.700l2.700 2.700v11.700H.8zM4 1v5h8V1M3.500 15V9h9v6M5 11h6M5 13h6" /></Icon></ToolBtn>
          <DarkSep />
          <ToolBtn $dim aria-label="撤销"><Icon><path d="M5 1L1 5l4 4M1 5h9c6 0 6 9 0 10" /></Icon></ToolBtn>
          <ToolBtn $dim $w={14} aria-label="撤销列表"><Caret /></ToolBtn>
          <ToolBtn $dim aria-label="重做"><Icon><path d="M11 1l4 4-4 4M15 5H6c-6 0-6 9 0 10" /></Icon></ToolBtn>
          <DarkSep />
          <ToolBtn $dim aria-label="剪切"><Icon><circle cx="3" cy="6" r="2.200" /><circle cx="6" cy="13" r="2.200" /><path d="M5 7l10 2M7 11l5-10M5 7l2 4" /></Icon></ToolBtn>
          <ToolBtn $dim aria-label="复制"><Icon><path d="M6 11.500H.5V.5h6l3 3V5M6.500 5.500h6l3 3v7h-9zM12 6v3h3" /></Icon></ToolBtn>
          <ToolBtn $dim aria-label="粘贴"><Icon><path d="M6 13.500H.5v-11H4V.5h5v2h3.500V6M7.500 6.500h5l3 3v6h-8z" /></Icon></ToolBtn>
          <ToolBtn $dim aria-label="移动"><Icon><circle cx="6" cy="6" r="4.500" /><path d="M6 0v12M0 6h12M6 15.500h9.500V6M10 10l5 5" /></Icon></ToolBtn>
          <DarkSep />
          <ToolBtn aria-label="显示和隐藏"><EyeListWhite /></ToolBtn>
          <ToolBtn $w={14} aria-label="显示列表"><Caret /></ToolBtn>
          <DarkSep />
          <ToolBtn aria-label="语音"><Icon><rect x="5.500" y=".5" width="5" height="9" rx="2.500" /><path d="M2.500 6v2c0 6 11 6 11 0V6M8 12v3.500M5 15.500h6M6 4h4M6 6.500h4" /></Icon></ToolBtn>
          <DarkSep />
          <ToolBtn aria-label="触控"><Icon><path d="M7 4l6-1.500 2.500 3L12 12l-6-.5zM13 2.500L11 9l1 3M9 6L3 6.500.5 9 5 10.500M4 8.500h4" /></Icon></ToolBtn>
          <DarkSep />
          <ToolBtn aria-label="切换窗口"><Icon><path d="M5 10.500H.5V.5h12V5M0 3.500h12M5.500 5.500h10v10h-10zM5 8.500h11" /></Icon></ToolBtn>
          <ToolBtn $w={50}><Win size={16} />窗口</ToolBtn>
          <ToolBtn $w={12} aria-label="窗口列表"><Caret /></ToolBtn>
          <ToolBtn $w={14} aria-label="自定义"><svg width="7" height="7"><path d="M0 .5h7" stroke="#fff" /><path d="M0 3h7L3.500 7z" fill="#fff" /></svg></ToolBtn>
          <WindowTitle>NX 2406 山涧果子 - 建模</WindowTitle>
          <Siemens>SIEMENS</Siemens>
          <WinTools>
            <ToolBtn $w={8} aria-label="最小化"><svg width="8" height="12"><path d="M0 11h8" stroke="#fff" strokeWidth="2" /></svg></ToolBtn>
            <ToolBtn $w={12} aria-label="还原"><svg width="12" height="12" fill="none" stroke="#fff"><path d="M3 4V1h8v6H9M3 1.500h8M.5 5.500h8v5h-8z" strokeWidth="1.300" /></svg></ToolBtn>
            <ToolBtn $w={12} aria-label="关闭"><svg width="12" height="12" stroke="#fff" strokeWidth="2"><path d="M1 1l10 10M11 1L1 11" /></svg></ToolBtn>
          </WinTools>
        </TitleRow>
        <MenuRow>
          {TABS.map(([t, w]) => <Tab key={t} $w={w} $on={t === "视图"}>{t}</Tab>)}
          <Search>
            <input aria-label="搜索" placeholder="搜索 (Ctrl+Space)" />
            <Icon><circle cx="10" cy="6" r="5" /><path d="M6 9l-5 5 1.500 1.500L8 10.500" /></Icon>
          </Search>
          <TitleTools>
            <ToolBtn $w={16} aria-label="全屏"><Icon w={1.300}><path d="M5 .8H.8V5M11 .8h4.200V5M5 15.200H.8V11M11 15.200h4.200V11" /></Icon></ToolBtn>
            <ToolBtn $w={16} aria-label="收起"><Icon w={1.300}><path d="M.5 12L8 4l7.500 8" /></Icon></ToolBtn>
            <ToolBtn $w={16} aria-label="帮助"><Icon w={1.200}><circle cx="8" cy="8" r="7.300" /><path d="M5.700 6.300c0-3 4.600-3 4.600-.3C10.300 7.800 8 8 8 10M8 11.500V13" /></Icon></ToolBtn>
            <ToolBtn $w={8} aria-label="提醒"><svg width="2" height="16"><path d="M0 0h2v12H0zM0 14h2v2H0z" fill="#fff" /></svg></ToolBtn>
          </TitleTools>
        </MenuRow>
      </Header>

      <Ribbon>
        <RibbonGroup $w={145}>
          <GroupBody $pad={7} $gap={14}>
            <BigBtn $w={44}>
              <svg width="32" height="32" fill="none" stroke={ink}><path d="M.5 .5h31v31H.5zM0 4.500h32M23 2.500h1m2 0h1m2 0h1" /></svg>
              <span>窗口</span><Caret />
            </BigBtn>
            <LayoutGrid>
              {LAYOUTS.map((d, i) => <button key={i} aria-label={`布局 ${i + 1}`}><LayoutIcon d={d} /></button>)}
            </LayoutGrid>
          </GroupBody>
          <GroupFoot><span>窗口</span><Caret /></GroupFoot>
        </RibbonGroup>

        <RibbonGroup $w={223}>
          <GroupBody $pad={12} $gap={9}>
            <Stack $gap={11} $top={4}>
              <LineBtn><Win>{fitGlyph}</Win>适合窗口</LineBtn>
              <LineBtn><Win>{panGlyph}</Win>平移</LineBtn>
            </Stack>
            <Stack $gap={11} $top={4}>
              <LineBtn><Win>{zoomGlyph}</Win>缩放</LineBtn>
              <LineBtn><Win>{rotateGlyph}</Win>旋转</LineBtn>
            </Stack>
            <Stack $gap={0} $top={5}>
              <Field><input defaultValue="1.4594" />比例</Field>
            </Stack>
          </GroupBody>
          <GroupFoot><span>操作</span><Caret /></GroupFoot>
        </RibbonGroup>

        <RibbonGroup $w={193}>
          <GroupBody $pad={12} $gap={9}>
            <Stack $gap={7}>
              <LineBtn><Plane />漫游</LineBtn>
              <LineBtn disabled><HomeWin kind="save" />保存主页</LineBtn>
              <LineBtn disabled><HomeWin kind="restore" />恢复主页</LineBtn>
            </Stack>
            <Stack $gap={7}>
              <LineBtn disabled><PlaneTool />漫游至所选对象</LineBtn>
              <LineBtn disabled><HomeWin kind="pan" />平移至所选对象</LineBtn>
              <LineBtn><PlaneTool gear />选项</LineBtn>
            </Stack>
          </GroupBody>
          <GroupFoot><span>导航</span><Caret /></GroupFoot>
        </RibbonGroup>

        <RibbonGroup $w={280}>
          <GroupBody $pad={9}>
            <TipAnchor>
              <BigBtn $w={62} $on aria-describedby="tip"><EyeList /><span>显示和隐藏</span></BigBtn>
              <Tip role="tooltip" id="tip">
                <EyeList size={48} />
                <TipText><strong>显示和隐藏 (Ctrl+W)</strong><span>按类型显示或隐藏对象。</span></TipText>
              </Tip>
            </TipAnchor>
            <BigBtn $w={54}><EyeFlash /><span>立即隐藏</span></BigBtn>
            <BigBtn $w={52}><SectionBody tool="wrench" /><span>编辑截面</span></BigBtn>
            <BigBtn $w={54}><SectionBody tool="switch" /><span>剪切截面</span></BigBtn>
            <BigBtn $w={54}><EyeList /><span>更多</span><Caret /></BigBtn>
          </GroupBody>
          <GroupFoot aria-label="可见性选项"><span /><Caret /></GroupFoot>
        </RibbonGroup>

        <RibbonGroup $w={152}>
          <GroupBody $pad={12} $gap={8}>
            <Stack $gap={7}>
              <LineBtn><LayerSmall kind="gear" />图层设置</LineBtn>
              <LineBtn><LayerSmall kind="move" />移动至图层</LineBtn>
              <InlineField>工作层
                <SelectWrap $w={49}><select defaultValue="1"><option>1</option></select><Caret s={7} /></SelectWrap>
              </InlineField>
            </Stack>
            <BigBtn $w={44}><Layers /><span>更多</span><Caret /></BigBtn>
          </GroupBody>
          <GroupFoot><span>层</span><Caret /></GroupFoot>
        </RibbonGroup>
        <RibbonEnd aria-label="功能区选项"><Caret /></RibbonEnd>
      </Ribbon>

      <SelectionBar>
        <MenuBtn><svg width="12" height="10" stroke={ink}><path d="M1 .5h10M1 4.500h10M1 8.500h10" /></svg><span>菜单(<u>M</u>)</span><Caret /></MenuBtn>
        <LightSep />
        <Push $w={12} />
        <SelectWrap $w={149} $off><select disabled aria-label="类型过滤器" /><Caret s={7} /></SelectWrap>
        <IconSlot $w={34} $faded aria-label="重置过滤器"><Icon w={1.300}><path d="M1 .8h10L7.500 6v7L5 11V6zM10 10h5v5M12 8l-2.500 2 2.500 2" /></Icon></IconSlot>
        <SelectWrap $w={156} $off><select disabled aria-label="选择范围"><option>仅在工作部件内</option></select><Caret s={7} /></SelectWrap>
        <Push $w={3} />
        <IconSlot $faded aria-label="装配"><Icon><path d="M3 4l6-3 5 1.500v6l-4 2v3l-4 2-3-1.500z" fill="#ccc" /><path d="M3 4l4 2 7-3.500M7 6v9M10 4.500v6" /></Icon></IconSlot>
        <IconSlot $faded aria-label="关联"><Icon w={1.300}><circle cx="4" cy="4" r="2.500" /><path d="M4 0v8M0 4h8" /><rect x="4" y="9" width="8" height="4" rx="2" transform="rotate(-40 8 11)" /><rect x="8" y="7" width="8" height="4" rx="2" transform="rotate(-40 12 9)" /></Icon></IconSlot>
        <IconSlot aria-label="禁止"><Icon w={2.300}><circle cx="8" cy="8" r="6" stroke="#cc0a0a" /><path d="M4 12l8-8" stroke="#cc0a0a" /></Icon></IconSlot>
        <IconSlot aria-label="实体"><Cube {...orange} /></IconSlot>
        <IconSlot aria-label="片体"><Icon><path d="M6 2q4-2 9 0-4 4-5 9l-4 4-5-2q1-7 5-11z" fill="#f08a24" stroke="#a34e08" /></Icon></IconSlot>
        <IconSlot aria-label="面"><Cube top="#ef7f1a" left="#f0f0f0" right="#bdbdbd" edge="#999" /></IconSlot>
        <IconSlot aria-label="边"><Cube top="#fff" left="#e8e8e8" edge="#e67817" /></IconSlot>
        <Push $w={190} />
        <IconSlot aria-label="透明"><Icon w={0.8}><path d="M1 5l7-4 6 3v8l-6 3.500L1 12z" fill="#ddd" stroke="#777" /><path d="M1 5l6 2v8M4 3v10" stroke="#888" /><path d="M8 1v10l6 3V4z" fill="none" stroke="#e67817" strokeWidth="1.200" /></Icon></IconSlot>
        <Push $w={6} />
        <LightSep />
        <Push />
        <IconSlot $w={6} aria-label="选择条选项"><Caret /></IconSlot>
      </SelectionBar>

      <Body>
        <Rail>
          <RailBtn $first aria-label="设置"><GearOutline /></RailBtn>
          {RAIL.map((r) => <RailBtn key={r.label} aria-label={r.label} $on={r.on}>{r.icon}</RailBtn>)}
        </Rail>

        <Side>
          <SideTitle><Bracket />部件导航器<button aria-label="最大化" /></SideTitle>
          <Sheet>
            <SheetRows>
              <Table>
                <colgroup><col style={{ width: 196 }} /><col style={{ width: 39 }} /><col style={{ width: 24 }} /><col /></colgroup>
                <thead>
                  <tr><th><SortHead>名称<svg width="10" height="5"><path d="M5 0l5 5H0z" fill="#222" /></svg></SortHead></th><th>当...</th><th>最</th><th>附注</th></tr>
                </thead>
                <tbody>
                  {NAV.map((n) => (
                    <tr key={n.text}>
                      <td><TreeCell n={n} /></td>
                      <td>{n.mark && <CellIcon $pad={4}><Chain /></CellIcon>}</td>
                      <td>{n.tick && <CellIcon $pad={4}><Tick /></CellIcon>}</td>
                      <td />
                    </tr>
                  ))}
                  {Array.from({ length: 30 }, (_, i) => <tr key={i}><td /><td /><td /><td /></tr>)}
                </tbody>
              </Table>
            </SheetRows>
            <ScrollTrack />
          </Sheet>
          <Splitter />
          {["搜索", "相关性", "细节", "预览"].map((t) => (
            <Fold key={t}><svg width="5" height="9"><path d="M0 0l5 4.500L0 9z" fill={blue} /></svg>{t}</Fold>
          ))}
        </Side>

        <Main>
          <FileTab>
            <Bracket size={15} />
            <span>Oblique_view.prt</span>
            <svg width="11" height="11" fill="none" stroke="#fff" strokeWidth="1.500"><path d="M8.500 8v2H1V1h5l2.500 2.500M4 7.500h3l3-3" /></svg>
            <ToolBtn $w={14} aria-label="关闭文件"><svg width="8" height="8" stroke="#c8c8c8" strokeWidth="2"><path d="M1 1l6 6M7 1L1 7" /></svg></ToolBtn>
          </FileTab>
          <Canvas>
            <Placed $x={340} $y={255}><PartModel /></Placed>
            <Placed $x={79} $y={610}><Triad /></Placed>
            <Dialog role="dialog" aria-label="显示和隐藏">
              <DialogHead>
                <Cog size={16} w={2} />
                <DialogTitle>显示和隐藏</DialogTitle>
                <button aria-label="帮助">?</button>
                <button aria-label="关闭对话框"><svg width="12" height="12" stroke="#fff" strokeWidth="2"><path d="M1 1l10 10M11 1L1 11" /></svg></button>
              </DialogHead>
              <DialogSheet>
                <SheetRows>
                  <Table>
                    <colgroup><col style={{ width: 210 }} /><col style={{ width: 60 }} /><col style={{ width: 60 }} /><col /></colgroup>
                    <thead><tr><th>类型</th><th>显示</th><th>隐藏</th><th aria-label="空" /></tr></thead>
                    <tbody>
                      {TYPES.map((n) => (
                        <tr key={n.text}>
                          <td><TreeCell n={n} /></td>
                          <td><EyeBtn aria-label={`显示${n.text}`}><Eye /></EyeBtn></td>
                          <td><EyeBtn aria-label={`隐藏${n.text}`}><EyeOff /></EyeBtn></td>
                          <td />
                        </tr>
                      ))}
                      {Array.from({ length: 7 }, (_, i) => <tr key={i}><td /><td /><td /><td /></tr>)}
                    </tbody>
                  </Table>
                </SheetRows>
              </DialogSheet>
              <DialogFoot><Primary>关闭</Primary></DialogFoot>
            </Dialog>
          </Canvas>
        </Main>
      </Body>

      <Status>针对一个对象选取“显示”或“隐藏”。</Status>
      <Desktop />
      <Watermark>CSDN @山涧果子</Watermark>
      <Ime>
        <ImeLogo>
          <svg width="32" height="32" viewBox="0 0 32 32" fill="none"><path d="M1 6q0-2 2-2.500L24 0q3 0 3.500 2L31 25q0 3-2 3.500L9 32q-3 0-3.500-2z" fill="#f4511e" /><path d="M24 9q-6-3-11-1-4 2-3 5 2 3 8 3 5 1 4 5-3 4-13 2" stroke="#fff" strokeWidth="4" /></svg>
        </ImeLogo>
        <strong>英</strong>
        <Icon><circle cx="3.500" cy="4.500" r="2" fill="#0b6fd6" stroke="none" /><path d="M11 9.500q1 3-1.500 5" strokeWidth="2.500" /></Icon>
        <Icon><rect x="5" y=".5" width="6" height="9" rx="3" fill="#0b6fd6" stroke="none" /><path d="M2.500 6v2c0 6 11 6 11 0V6M8 12v3.500" strokeWidth="1.500" /></Icon>
        <Icon><rect x="1" y="3" width="14" height="11" rx="1" strokeWidth="1.500" /><path d="M3 6h10M3 8.500h10M5 11.500h6M6 4v6M10 4v6" /></Icon>
        <Icon><path d="M1 5l4-2q3 3 5 0l4 2-1 4h-1.500v6H4V9H2z" fill="#a074f2" stroke="none" /><path d="M1 5l4-2 2 2-3 4H2z" fill="#ef6a8a" stroke="none" /><circle cx="14" cy="2" r="2" fill="#f4472e" stroke="none" /></Icon>
        <Icon><path d="M1 8c0-7 14-7 14 0v3h-4l-1-1H6l-1 1H1z" fill="#0b6fd6" stroke="none" /><path d="M4 7h4M6 5v4M10.500 7h2" stroke="#fff" /><path d="M2 12l1 3M14 12l-1 3" strokeWidth="2" /></Icon>
        <Icon><path d="M1 2h6v5H1zM1 9h6v6H1zM9 9h6v6H9z" fill="#0b6fd6" stroke="none" /><circle cx="12" cy="4.500" r="3" fill="#0b6fd6" stroke="none" /></Icon>
      </Ime>
    </Page>
  );
}
